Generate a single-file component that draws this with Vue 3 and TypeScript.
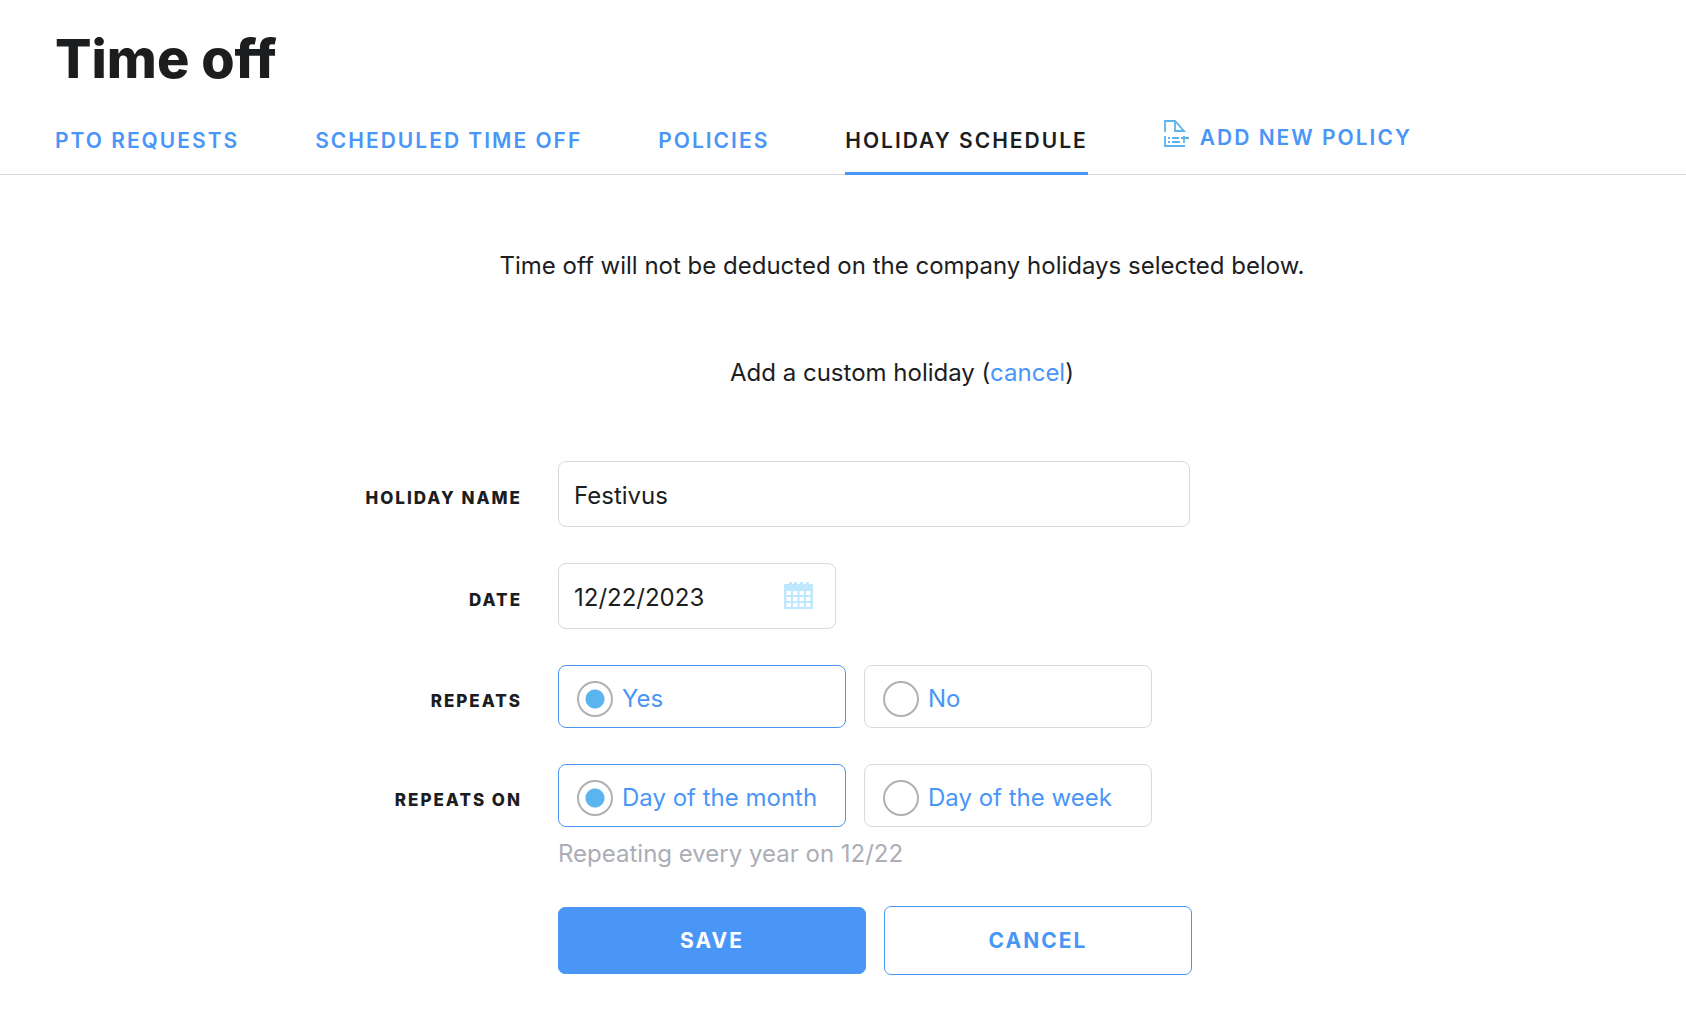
<script setup lang="ts">
import { ref } from 'vue'

interface Choice {
  value: string
  label: string
}

const tabs = ['PTO requests', 'Scheduled time off', 'Policies', 'Holiday schedule']
const activeTab = ref('Holiday schedule')

const repeatChoices: Choice[] = [
  { value: 'yes', label: 'Yes' },
  { value: 'no', label: 'No' },
]
const repeatOnChoices: Choice[] = [
  { value: 'month', label: 'Day of the month' },
  { value: 'week', label: 'Day of the week' },
]

const holidayName = ref('Festivus')
const date = ref('12/22/2023')
const repeats = ref('yes')
const repeatsOn = ref('month')
</script>

<template>
  <div class="page">
    <header class="header">
      <h1 class="title">Time off</h1>
      <nav class="tabs">
        <a
          v-for="tab in tabs"
          :key="tab"
          href="#"
          class="tab"
          :class="{ active: tab === activeTab }"
          @click.prevent="activeTab = tab"
        >{{ tab }}</a>
        <a href="#" class="tab add">
          <svg class="add-icon" width="26" height="28" viewBox="0 0 26 28" fill="none" stroke="#5ab4ee" stroke-width="1.8">
            <path d="M1 12V1H11L20 11H11V1" />
            <path d="M1 16V26H21M4 18H6M8 18H15M4 22H6M8 22H16M17 18H25M20 16V23" />
          </svg>
          <span>Add new policy</span>
        </a>
      </nav>
    </header>

    <main class="content">
      <p class="note">Time off will not be deducted on the company holidays selected below.</p>
      <p class="note">Add a custom holiday (<a href="#" class="link">cancel</a>)</p>

      <form class="form" @submit.prevent>
        <div class="row">
          <label class="label" for="holiday-name">Holiday name</label>
          <input id="holiday-name" v-model="holidayName" class="input" type="text" />
        </div>

        <div class="row">
          <label class="label" for="holiday-date">Date</label>
          <div class="input date">
            <input id="holiday-date" v-model="date" class="date-text" type="text" />
            <svg width="29" height="27" viewBox="0 0 29 27" fill="#bfe8ff">
              <path fill-rule="evenodd" d="M0 2H5V0H8V2H10V0H13V2H16V0H19V2H22V0H25V2H29V27H0ZM2.500 9V13H7V9ZM9 9V13H13.500V9ZM15.500 9V13H20V9ZM22 9V13H26.500V9ZM2.500 15V19H7V15ZM9 15V19H13.500V15ZM15.500 15V19H20V15ZM22 15V19H26.500V15ZM2.500 21V25H7V21ZM9 21V25H13.500V21ZM15.500 21V25H20V21ZM22 21V25H26.500V21Z" />
            </svg>
          </div>
        </div>

        <div class="row" role="radiogroup" aria-labelledby="repeats-label">
          <span id="repeats-label" class="label">Repeats</span>
          <div class="choices">
            <label v-for="c in repeatChoices" :key="c.value" class="choice" :class="{ on: repeats === c.value }">
              <input v-model="repeats" class="radio" type="radio" name="repeats" :value="c.value" />
              <span>{{ c.label }}</span>
            </label>
          </div>
        </div>

        <div class="row" role="radiogroup" aria-labelledby="repeats-on-label">
          <span id="repeats-on-label" class="label">Repeats on</span>
          <div class="choices">
            <label v-for="c in repeatOnChoices" :key="c.value" class="choice" :class="{ on: repeatsOn === c.value }">
              <input v-model="repeatsOn" class="radio" type="radio" name="repeats-on" :value="c.value" />
              <span>{{ c.label }}</span>
            </label>
          </div>
          <p class="hint">Repeating every year on 12/22</p>
        </div>

        <div class="row">
          <div class="actions">
            <button type="submit" class="button primary">Save</button>
            <button type="button" class="button">Cancel</button>
          </div>
        </div>
      </form>
    </main>
  </div>
</template>

<style>
body {
  margin: 0;
  background: #fff;
}
</style>

<style scoped>
.page {
  box-sizing: border-box;
  font-family: Inter, 'Liberation Sans', sans-serif;
  font-size: 24px;
  line-height: 32px;
  color: #1c1d1f;
}
.header {
  padding: 27px 55px 0;
  border-bottom: 1px solid #d9dadd;
}
.title {
  margin: 0;
  font-size: 54px;
  line-height: 64px;
  font-weight: 800;
}
.tabs {
  display: flex;
  gap: 76px;
  margin-top: 27px;
}
.tab {
  box-sizing: border-box;
  height: 57px;
  margin-bottom: -1px;
  padding-top: 7px;
  border-bottom: 3px solid transparent;
  font-size: 21px;
  font-weight: 600;
  letter-spacing: 2px;
  text-transform: uppercase;
  text-decoration: none;
  white-space: nowrap;
  color: #4a96f7;
}
.tab.active {
  color: #1c1d1f;
  border-bottom-color: #4a96f7;
}
.add {
  display: flex;
  align-items: flex-start;
  gap: 10px;
  padding-top: 2px;
}
.add span {
  padding-top: 2px;
}
.add-icon {
  flex: none;
}
.content {
  padding: 75px 0 40px 118px;
}
.note {
  margin: 0 0 75px;
  text-align: center;
}
.link {
  color: #4a96f7;
  text-decoration: none;
}
.form {
  display: flex;
  flex-direction: column;
  gap: 36px;
  max-width: 1200px;
  margin: -3px auto 0;
}
.row {
  display: grid;
  grid-template-columns: 220px 1fr;
  column-gap: 36px;
  align-items: center;
}
.label {
  padding-top: 8px;
  text-align: right;
  font-size: 17px;
  font-weight: 800;
  letter-spacing: 2px;
  text-transform: uppercase;
}
.input {
  box-sizing: border-box;
  width: 100%;
  max-width: 632px;
  height: 66px;
  padding: 2px 15px 0;
  border: 1px solid #d9dadd;
  border-radius: 8px;
  background: #fff;
  font: inherit;
  color: inherit;
}
.date {
  display: flex;
  align-items: center;
  max-width: 278px;
  padding: 0 22px 2px 15px;
}
.date-text {
  flex: 1;
  min-width: 0;
  padding: 5px 0 0;
  border: 0;
  background: none;
  font: inherit;
  color: inherit;
}
.choices {
  display: grid;
  grid-template-columns: 1fr 1fr;
  gap: 18px;
  max-width: 594px;
}
.choice {
  display: flex;
  align-items: center;
  gap: 9px;
  box-sizing: border-box;
  height: 63px;
  padding: 4px 18px 0;
  border: 1px solid #d9dadd;
  border-radius: 8px;
  color: #4a96f7;
  white-space: nowrap;
}
.choice.on {
  border-color: #4a96f7;
}
.radio {
  flex: none;
  appearance: none;
  width: 36px;
  height: 36px;
  margin: 0;
  border: 2px solid #b1b1b1;
  border-radius: 50%;
}
.radio:checked {
  background: radial-gradient(circle, #5ab4ee 0 9px, transparent 10px);
}
.hint {
  grid-column: 2;
  margin: 11px 0 0;
  color: #abadb7;
}
.actions {
  grid-column: 2;
  display: grid;
  grid-template-columns: 1fr 1fr;
  gap: 18px;
  align-items: center;
  max-width: 634px;
}
.button {
  height: 69px;
  padding: 0;
  border: 1px solid #4a96f7;
  border-radius: 7px;
  background: #fff;
  font: inherit;
  font-size: 21px;
  font-weight: 700;
  letter-spacing: 2px;
  text-transform: uppercase;
  color: #4a96f7;
}
.primary {
  height: 67px;
  background: #4a96f7;
  color: #fff;
}
</style>
